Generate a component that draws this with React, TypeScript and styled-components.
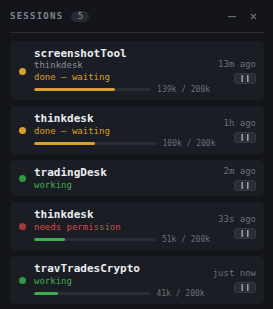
import styled, { createGlobalStyle } from 'styled-components';

type Tone = 'amber' | 'green' | 'red';

type Session = {
  name: string,
  project?: string,
  status: string,
  tone: Tone,
  used?: number,
  time: string,
};

const tones: Record<Tone, { dot: string, text: string, bar: string }> = {
  amber: { dot: '#d9a02b', text: '#d9a02b', bar: '#d9a02b' },
  green: { dot: '#2f9a44', text: '#3cb050', bar: '#3cb050' },
  red: { dot: '#a53b3b', text: '#d9484a', bar: '#3cb050' },
};

const sessions: Session[] = [
  {
    name: 'screenshotTool', project: 'thinkdesk', status: 'done — waiting', tone: 'amber', used: 139, time: '13m ago',
  },
  {
    name: 'thinkdesk', status: 'done — waiting', tone: 'amber', used: 100, time: '1h ago',
  },
  {
    name: 'tradingDesk', status: 'working', tone: 'green', time: '2m ago',
  },
  {
    name: 'thinkdesk', status: 'needs permission', tone: 'red', used: 51, time: '33s ago',
  },
  {
    name: 'travTradesCrypto', status: 'working', tone: 'green', used: 41, time: 'just now',
  },
];

const LIMIT = 200;

const GlobalStyle = createGlobalStyle`
  html, body {
    margin: 0;
    background: #13151b;
  }
  body {
    font-family: "DejaVu Sans Mono", "Liberation Mono", monospace;
  }
`;

const StyledPanel = styled.div`
  width: 273px;
  height: 309px;
  box-sizing: border-box;
  padding: 0 9px 0 10px;
  background: #13151b;
  overflow: hidden;
`;

const StyledHeader = styled.div`
  display: flex;
  align-items: center;
  height: 32px;
  border-bottom: 1px solid #2a2d34;
`;

const StyledTitle = styled.span`
  color: #7f858e;
  font-size: 9px;
  font-weight: 700;
  letter-spacing: 1.25px;
`;

const StyledCount = styled.span`
  margin-left: 8px;
  width: 18px;
  height: 11px;
  border-radius: 6px;
  background: #262a31;
  color: #8b9098;
  font-size: 9px;
  line-height: 11px;
  text-align: center;
`;

const StyledHeaderActions = styled.div`
  display: flex;
  align-items: center;
  gap: 13px;
  margin-left: auto;
  margin-right: 7px;
  color: #666b74;
`;

const StyledIconButton = styled.span`
  display: flex;
  align-items: center;
  justify-content: center;
  width: 8px;
  height: 8px;
`;

const StyledList = styled.div`
  display: flex;
  flex-direction: column;
  gap: 6px;
  padding-top: 8px;
`;

const StyledCard = styled.div`
  display: flex;
  align-items: center;
  gap: 8px;
  padding: 6px 8px 5px 9px;
  border-radius: 5px;
  background: #1a1d24;
`;

const StyledDot = styled.span<{ $tone: Tone }>`
  flex: none;
  width: 7px;
  height: 7px;
  border-radius: 50%;
  background: ${(props) => tones[props.$tone].dot};
`;

const StyledMain = styled.div`
  flex: 1;
  min-width: 0;
  display: flex;
  flex-direction: column;
`;

const StyledName = styled.div`
  color: #eceef2;
  font-size: 11px;
  font-weight: 700;
  line-height: 13px;
`;

const StyledProject = styled.div`
  color: #8b9098;
  font-size: 9px;
  line-height: 11px;
`;

const StyledStatus = styled.div<{ $tone: Tone }>`
  color: ${(props) => tones[props.$tone].text};
  font-size: 9px;
  line-height: 12px;
`;

const StyledUsage = styled.div`
  display: flex;
  align-items: center;
  gap: 6px;
  height: 12px;
`;

const StyledTrack = styled.div`
  flex: 1;
  height: 3px;
  border-radius: 2px;
  background: #2a2d34;
  overflow: hidden;
`;

const StyledFill = styled.div<{ $tone: Tone }>`
  height: 100%;
  border-radius: 2px;
  background: ${(props) => tones[props.$tone].bar};
`;

const StyledUsageLabel = styled.span`
  color: #6b7078;
  font-size: 8px;
`;

const StyledSide = styled.div`
  flex: none;
  display: flex;
  flex-direction: column;
  align-items: flex-end;
  gap: 3px;
`;

const StyledTime = styled.span`
  color: #6b7078;
  font-size: 9px;
  line-height: 11px;
`;

const StyledPause = styled.button`
  display: flex;
  align-items: center;
  justify-content: center;
  width: 22px;
  height: 11px;
  padding: 0;
  border: 1px solid #343840;
  border-radius: 3px;
  background: #2a2d34;
  color: #a3a8b0;
  cursor: pointer;
`;

export default function App() {
  return (
    <>
      <GlobalStyle />
      <StyledPanel>
        <StyledHeader>
          <StyledTitle>SESSIONS</StyledTitle>
          <StyledCount>{sessions.length}</StyledCount>
          <StyledHeaderActions>
            <StyledIconButton>
              <svg width="8" height="8" viewBox="0 0 8 8">
                <rect x="0" y="4" width="8" height="1.2" fill="currentColor" />
              </svg>
            </StyledIconButton>
            <StyledIconButton>
              <svg width="7" height="7" viewBox="0 0 7 7">
                <path d="M1 1 L6 6 M6 1 L1 6" stroke="currentColor" strokeWidth="1.3" />
              </svg>
            </StyledIconButton>
          </StyledHeaderActions>
        </StyledHeader>
        <StyledList>
          {sessions.map((session, index) => (
            <StyledCard key={`${session.name}-${index}`}>
              <StyledDot $tone={session.tone} />
              <StyledMain>
                <StyledName>{session.name}</StyledName>
                {session.project && <StyledProject>{session.project}</StyledProject>}
                <StyledStatus $tone={session.tone}>{session.status}</StyledStatus>
                {session.used !== undefined && (
                  <StyledUsage>
                    <StyledTrack>
                      <StyledFill
                        $tone={session.tone}
                        style={{ width: `${(session.used / LIMIT) * 100}%` }}
                      />
                    </StyledTrack>
                    <StyledUsageLabel>{`${session.used}k / ${LIMIT}k`}</StyledUsageLabel>
                  </StyledUsage>
                )}
              </StyledMain>
              <StyledSide>
                <StyledTime>{session.time}</StyledTime>
                <StyledPause aria-label="pause">
                  <svg width="8" height="7" viewBox="0 0 8 7">
                    <rect x="0.5" y="0" width="1.4" height="7" fill="currentColor" />
                    <rect x="6.1" y="0" width="1.4" height="7" fill="currentColor" />
                  </svg>
                </StyledPause>
              </StyledSide>
            </StyledCard>
          ))}
        </StyledList>
      </StyledPanel>
    </>
  );
}
